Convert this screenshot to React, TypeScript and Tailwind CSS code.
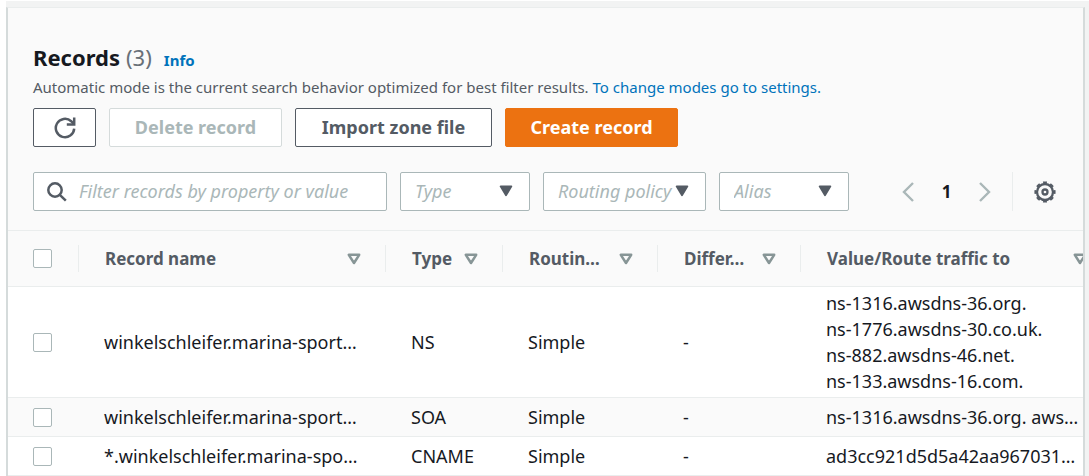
import type { ReactNode } from "react";

interface RecordRow {
  name: string;
  type: string;
  policy: string;
  differentiator: string;
  values: string[];
}

const records: RecordRow[] = [
  {
    name: "winkelschleifer.marina-sport…",
    type: "NS",
    policy: "Simple",
    differentiator: "-",
    values: [
      "ns-1316.awsdns-36.org.",
      "ns-1776.awsdns-30.co.uk.",
      "ns-882.awsdns-46.net.",
      "ns-133.awsdns-16.com.",
    ],
  },
  {
    name: "winkelschleifer.marina-sport…",
    type: "SOA",
    policy: "Simple",
    differentiator: "-",
    values: ["ns-1316.awsdns-36.org. aws…"],
  },
  {
    name: "*.winkelschleifer.marina-spo…",
    type: "CNAME",
    policy: "Simple",
    differentiator: "-",
    values: ["ad3cc921d5d5a42aa967031…"],
  },
];

function RefreshIcon() {
  return (
    <svg viewBox="0 0 22 22" className="size-[22px]" fill="none" stroke="currentColor" strokeWidth="2.5">
      <path d="M20.2 11.6a9.2 9.2 0 1 1-3-7.4l2.6 2.6" />
      <path d="M20.2 .6v7h-7.4" />
    </svg>
  );
}

function SearchIcon() {
  return (
    <svg viewBox="0 0 20 20" className="size-5 shrink-0" fill="none" stroke="#545b64" strokeWidth="2.5">
      <circle cx="8" cy="8" r="6.7" />
      <path d="M12.8 12.8l6 5.8" />
    </svg>
  );
}

function GearIcon() {
  return (
    <svg viewBox="0 0 22 22" className="size-[22px]" fill="none" stroke="currentColor">
      <circle cx="11" cy="11" r="8" strokeWidth="2.3" />
      <circle cx="11" cy="11" r="9.6" strokeWidth="2" pathLength="80" strokeDasharray="5.2 4.8" strokeDashoffset="2.6" />
      <circle cx="11" cy="11" r="2.5" strokeWidth="2.3" />
    </svg>
  );
}

function Chevron({ direction }: { direction: "left" | "right" }) {
  return (
    <svg viewBox="0 0 12 20" className="h-5 w-3" fill="none" stroke="#aab7b8" strokeWidth="2.4">
      <path d={direction === "left" ? "M11 1L2 10l9 9" : "M1 1l9 9-9 9"} />
    </svg>
  );
}

function SortIcon() {
  return (
    <svg viewBox="0 0 14 12" className="h-3 w-3.5 shrink-0" fill="none" stroke="#879596" strokeWidth="2.5" strokeLinejoin="round">
      <path d="M1.8 1.8h10.4L7 10z" />
    </svg>
  );
}

function Filter({ label, className }: { label: string; className: string }) {
  return (
    <div className={`relative shrink-0 ${className}`}>
      <select
        aria-label={label}
        defaultValue=""
        className="h-[39px] w-full appearance-none rounded-xs border border-[#aab7b8] bg-white pl-3.5 text-[18px] text-[#aab7b8] italic"
      >
        <option value="">{label}</option>
      </select>
      <svg viewBox="0 0 14 12" className="pointer-events-none absolute top-[13px] right-[17px] h-3 w-3.5">
        <path d="M1.6 1.4h10.8L7 10.2z" fill="#545b64" stroke="#545b64" strokeWidth="1.8" strokeLinejoin="round" />
      </svg>
    </div>
  );
}

function Checkbox({ label }: { label: string }) {
  return (
    <input
      type="checkbox"
      aria-label={label}
      className="block size-[19px] appearance-none rounded-xs border border-[#aab7b8] bg-white checked:bg-[#0073bb]"
    />
  );
}

function HeaderCell({ children }: { children: ReactNode }) {
  return (
    <th scope="col" className="p-0 font-bold">
      <div className="flex h-[27px] items-center justify-between border-l border-[#eaeded] pr-6 pl-[26px]">
        <span className="whitespace-nowrap">{children}</span>
        <SortIcon />
      </div>
    </th>
  );
}

const button = "flex h-[39px] items-center justify-center rounded-xs border text-[18px] font-bold";
const cell = "py-[3px] pl-[26px] whitespace-nowrap";

export default function App() {
  return (
    <div className="overflow-hidden bg-white pt-px pl-1.5 font-['Noto_Sans','Open_Sans',sans-serif] text-[#16191f]">
      <div className="bg-[#f2f3f3] pt-1.5 pr-1">
        <main className="overflow-hidden border-t border-r-2 border-l-2 border-t-[#eaeded] border-r-[#d5dbdb] border-l-[#d5dbdb] bg-[#fafafa]">
          <header className="px-[25px] pt-[35px] pb-[19px]">
            <h1 className="flex items-baseline gap-1.5 text-[22px] leading-7 font-bold">
              Records <span className="font-normal text-[#687078]">(3)</span>
              <a href="#info" className="ml-1.5 text-[15px] text-[#0073bb]">
                Info
              </a>
            </h1>
            <p className="text-[15px] leading-[26px] whitespace-nowrap text-[#545b64]">
              Automatic mode is the current search behavior optimized for best filter results.{" "}
              <a href="#settings" className="text-[#0073bb]">
                To change modes go to settings.
              </a>
            </p>
            <div className="mt-2 flex gap-[13px]">
              <button aria-label="Refresh" className={`${button} w-[63px] border-[#545b64] bg-white text-[#545b64]`}>
                <RefreshIcon />
              </button>
              <button disabled className={`${button} w-[173px] border-[#d5dbdb] bg-white text-[#aab7b8]`}>
                Delete record
              </button>
              <button className={`${button} w-[197px] border-[#545b64] bg-white text-[#545b64]`}>
                Import zone file
              </button>
              <button className={`${button} w-[173px] border-[#ec7211] bg-[#ec7211] text-white`}>Create record</button>
            </div>
            <div className="mt-[25px] flex items-center gap-[13px]">
              <label className="flex h-[39px] min-w-0 flex-1 items-center gap-3 rounded-xs border border-[#aab7b8] bg-white pl-[13px]">
                <SearchIcon />
                <input
                  type="text"
                  aria-label="Filter records"
                  placeholder="Filter records by property or value"
                  className="min-w-0 flex-1 text-[18px] outline-none placeholder:text-[#aab7b8] placeholder:italic"
                />
              </label>
              <Filter label="Type" className="w-[130px]" />
              <Filter label="Routing policy" className="w-[163px]" />
              <Filter label="Alias" className="w-[130px]" />
              <nav aria-label="Pages" className="ml-10 flex items-center">
                <button aria-label="Previous page">
                  <Chevron direction="left" />
                </button>
                <button aria-current="page" className="w-[65px] text-[17px] font-bold">
                  1
                </button>
                <button aria-label="Next page">
                  <Chevron direction="right" />
                </button>
              </nav>
              <div className="ml-2 flex h-[39px] items-center border-l border-[#eaeded] pr-0.5 pl-[21px]">
                <button aria-label="Preferences" className="text-[#545b64]">
                  <GearIcon />
                </button>
              </div>
            </div>
          </header>
          <table className="w-[calc(100%+28px)] table-fixed border-collapse text-left leading-[26px]">
            <colgroup>
              <col className="w-[70px]" />
              <col className="w-[307px]" />
              <col className="w-[117px]" />
              <col className="w-[155px]" />
              <col className="w-[143px]" />
              <col />
            </colgroup>
            <thead className="text-[17px] text-[#545b64]">
              <tr className="h-14 border-y border-[#eaeded]">
                <th className="p-0 pl-[25px]">
                  <Checkbox label="Select all records" />
                </th>
                <HeaderCell>Record name</HeaderCell>
                <HeaderCell>Type</HeaderCell>
                <HeaderCell>Routin…</HeaderCell>
                <HeaderCell>Differ…</HeaderCell>
                <HeaderCell>Value/Route traffic to</HeaderCell>
              </tr>
            </thead>
            <tbody className="text-[18px]">
              {records.map((record) => (
                <tr key={record.type} className="h-[39px] border-b border-[#eaeded] bg-white even:bg-[#fafafa]">
                  <td className="py-[3px] pl-[25px]">
                    <Checkbox label={`Select ${record.type} record`} />
                  </td>
                  <td className={cell}>{record.name}</td>
                  <td className={cell}>{record.type}</td>
                  <td className={cell}>{record.policy}</td>
                  <td className={cell}>{record.differentiator}</td>
                  <td className={cell}>
                    {record.values.map((value) => (
                      <div key={value}>{value}</div>
                    ))}
                  </td>
                </tr>
              ))}
            </tbody>
          </table>
        </main>
      </div>
    </div>
  );
}
